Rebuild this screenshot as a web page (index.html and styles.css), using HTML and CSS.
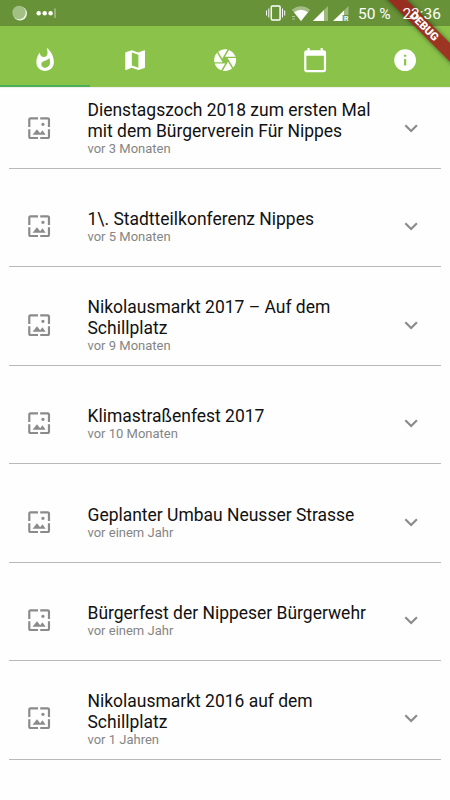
FILE: index.html
```html
<!DOCTYPE html>
<html lang="de">
<head>
<meta charset="utf-8">
<title>Nippes</title>
<link rel="stylesheet" href="styles.css">
</head>
<body>
<svg class="defs" width="0" height="0">
  <symbol id="wallpaper" viewBox="0 0 24 24"><path d="M4 4h7V2H4c-1.100 0-2 .9-2 2v7h2V4zm6 9l-4 5h12l-3-4-2.030 2.710L10 13zm7-4.500c0-.83-.67-1.500-1.500-1.500S14 7.670 14 8.500s.67 1.500 1.500 1.500S17 9.330 17 8.500zM20 2h-7v2h7v7h2V4c0-1.100-.9-2-2-2zm0 18h-7v2h7c1.100 0 2-.9 2-2v-7h-2v7zM4 13H2v7c0 1.100.9 2 2 2h7v-2H4v-7z"/></symbol>
  <symbol id="more" viewBox="0 0 24 24"><path d="M16.590 8.590L12 13.170 7.410 8.590 6 10l6 6 6-6z"/></symbol>
</svg>
<div class="screen">
  <header class="statusbar">
    <div class="status-left">
      <svg width="60" height="26" viewBox="0 0 60 26">
        <circle cx="20" cy="13.500" r="7" fill="#eef5e6"/>
        <circle cx="19" cy="12.500" r="6.700" fill="#a3c084"/>
        <g fill="#fff"><circle cx="38.700" cy="13.200" r="2.200"/><circle cx="44.700" cy="13.200" r="2.200"/><circle cx="50.600" cy="13.200" r="2.200"/></g>
        <path d="M55 8.500v9.500" stroke="#c5d6b3" stroke-width="1"/>
      </svg>
    </div>
    <div class="status-right">
      <svg width="88" height="26" viewBox="264 0 88 26">
        <rect x="271.300" y="6" width="8.800" height="14" rx="1" fill="none" stroke="#fff" stroke-width="1.500"/>
        <path d="M268.800 8.500v9M266.500 10.500v5M282.500 8.500v9M284.700 10.500v5" stroke="#fff" stroke-width="1"/>
        <path d="M291.800 9.700Q301 3 310.200 9.700L301 21z" fill="#fff" opacity=".4"/>
        <path d="M294 12.300Q301 7 308 12.300L301 21z" fill="#fff"/>
        <path d="M292 16.500h3M292 19h3" stroke="#c5d6b3" stroke-width=".8"/>
        <path d="M328 6v15h-15z" fill="#fff" opacity=".35"/><path d="M324 10v11h-11z" fill="#fff"/>
        <path d="M348.500 6v9h-5v6h-10z" fill="#fff" opacity=".35"/><path d="M344 10.500v4.500h-1.500v6h-9.500z" fill="#fff"/>
        <text class="roaming" x="344" y="21">R</text>
      </svg>
      <span class="battery">50 %</span>
      <span class="clock">23:36</span>
    </div>
  </header>
  <nav class="tabs">
    <a class="tab active"><svg viewBox="0 0 24 24"><path d="M13.500.67s.74 2.650.74 4.800c0 2.060-1.350 3.730-3.410 3.730-2.070 0-3.630-1.670-3.630-3.730l.03-.36C5.210 7.510 4 10.620 4 14c0 4.420 3.580 8 8 8s8-3.580 8-8C20 8.610 17.410 3.800 13.500.67zM11.710 19c-1.780 0-3.220-1.400-3.220-3.140 0-1.620 1.050-2.760 2.810-3.120 1.770-.36 3.600-1.210 4.620-2.580.39 1.290.59 2.650.59 4.040 0 2.650-2.150 4.800-4.800 4.800z"/></svg></a>
    <a class="tab"><svg viewBox="0 0 24 24"><path d="M20.500 3l-.16.03L15 5.100 9 3 3.360 4.900c-.21.07-.36.25-.36.48V20.500c0 .28.22.5.5.5l.16-.03L9 18.900l6 2.100 5.640-1.900c.21-.07.36-.25.36-.48V3.500c0-.28-.22-.5-.5-.5zM15 19l-6-2.110V5l6 2.110V19z"/></svg></a>
    <a class="tab"><svg viewBox="0 0 24 24"><path d="M9.400 10.500l4.770-8.260C13.470 2.090 12.750 2 12 2c-2.400 0-4.600.85-6.320 2.250l3.660 6.350.06-.1zM21.540 9c-.92-2.920-3.150-5.260-6-6.340L11.880 9h9.660zm.26 1h-7.490l.29.5 4.760 8.250C21 16.970 22 14.610 22 12c0-.69-.07-1.350-.2-2zM8.540 12l-3.900-6.750C3.010 7.030 2 9.390 2 12c0 .69.07 1.350.2 2h7.490l-1.150-2zm-6.080 3c.92 2.920 3.150 5.260 6 6.340L12.120 15H2.460zm11.270 0l-3.900 6.760c.7.15 1.420.24 2.170.24 2.400 0 4.600-.85 6.320-2.250l-3.660-6.350-.93 1.600z"/></svg></a>
    <a class="tab"><svg viewBox="0 0 24 24"><path d="M20 3h-1V1h-2v2H7V1H5v2H4c-1.100 0-2 .9-2 2v16c0 1.100.9 2 2 2h16c1.100 0 2-.9 2-2V5c0-1.100-.9-2-2-2zm0 18H4V8h16v13z"/></svg></a>
    <a class="tab"><svg viewBox="0 0 24 24"><path d="M12 2C6.480 2 2 6.480 2 12s4.480 10 10 10 10-4.480 10-10S17.520 2 12 2zm1 15h-2v-6h2v6zm0-8h-2V7h2v2z"/></svg></a>
  </nav>
  <main class="list">
    <article class="row"><svg class="icon"><use href="#wallpaper"/></svg><div class="text"><h2>Dienstagszoch 2018 zum ersten Mal mit dem Bürgerverein Für Nippes</h2><p>vor 3 Monaten</p></div><svg class="icon"><use href="#more"/></svg></article>
    <article class="row"><svg class="icon"><use href="#wallpaper"/></svg><div class="text"><h2>1\. Stadtteilkonferenz Nippes</h2><p>vor 5 Monaten</p></div><svg class="icon"><use href="#more"/></svg></article>
    <article class="row"><svg class="icon"><use href="#wallpaper"/></svg><div class="text"><h2>Nikolausmarkt 2017 – Auf dem Schillplatz</h2><p>vor 9 Monaten</p></div><svg class="icon"><use href="#more"/></svg></article>
    <article class="row"><svg class="icon"><use href="#wallpaper"/></svg><div class="text"><h2>Klimastraßenfest 2017</h2><p>vor 10 Monaten</p></div><svg class="icon"><use href="#more"/></svg></article>
    <article class="row"><svg class="icon"><use href="#wallpaper"/></svg><div class="text"><h2>Geplanter Umbau Neusser Strasse</h2><p>vor einem Jahr</p></div><svg class="icon"><use href="#more"/></svg></article>
    <article class="row"><svg class="icon"><use href="#wallpaper"/></svg><div class="text"><h2>Bürgerfest der Nippeser Bürgerwehr</h2><p>vor einem Jahr</p></div><svg class="icon"><use href="#more"/></svg></article>
    <article class="row"><svg class="icon"><use href="#wallpaper"/></svg><div class="text"><h2>Nikolausmarkt 2016 auf dem Schillplatz</h2><p>vor 1 Jahren</p></div><svg class="icon"><use href="#more"/></svg></article>
  </main>
  <div class="banner">DEBUG</div>
</div>
</body>
</html>
```
FILE: styles.css
```css
* { box-sizing: border-box; }
body { margin: 0; font-family: Roboto, sans-serif; background: #fefefe; }
.defs { position: absolute; }
.screen { position: relative; width: 450px; height: 800px; overflow: hidden; }
.statusbar { display: flex; justify-content: space-between; height: 26px; background: #689238; color: #fff; }
.status-left, .status-right { display: flex; }
.status-right { position: relative; z-index: 2; padding-right: 9px; font-size: 15.5px; line-height: 28px; white-space: nowrap; }
.battery { width: 38px; margin-left: 6px; }
.clock { width: 39px; margin-left: 6px; text-align: right; }
.roaming { font: bold 7px Roboto, sans-serif; fill: #fff; }
.tabs { display: flex; height: 61px; background: #8bc34a; box-shadow: 0 1px 1px rgba(0, 0, 0, .06); }
.tab { flex: 1; display: flex; justify-content: center; padding-top: 21px; border-bottom: 2px solid transparent; }
.tab.active { border-color: #4bb058; }
.tab svg { width: 26.25px; height: 26.25px; fill: #fff; }
.list { display: flex; flex-direction: column; gap: 17.500px; padding: 1px 9px 0; }
.row { display: flex; align-items: center; height: 80.940px; padding: 0 17px; border-bottom: 1px solid #b8b8b8; }
.icon { width: 26.25px; height: 26.25px; fill: #8b8b8b; flex: none; }
.text { width: 288px; margin: 0 22px 0 35.250px; }
h2, p { margin: 0; font-weight: 400; }
h2 { padding-top: 1px; font-size: 17.480px; line-height: 21px; color: #111; }
p { font-size: 13px; line-height: 14px; color: #858585; }
.banner { position: absolute; z-index: 1; left: 368.700px; top: 19.700px; width: 110px; height: 13.200px; transform: rotate(45deg); background: rgba(160, 28, 28, .85); box-shadow: 0 0 5px rgba(0, 0, 0, .5); color: #fff; font-size: 11.2px; font-weight: 900; line-height: 13.200px; text-align: center; }
```
